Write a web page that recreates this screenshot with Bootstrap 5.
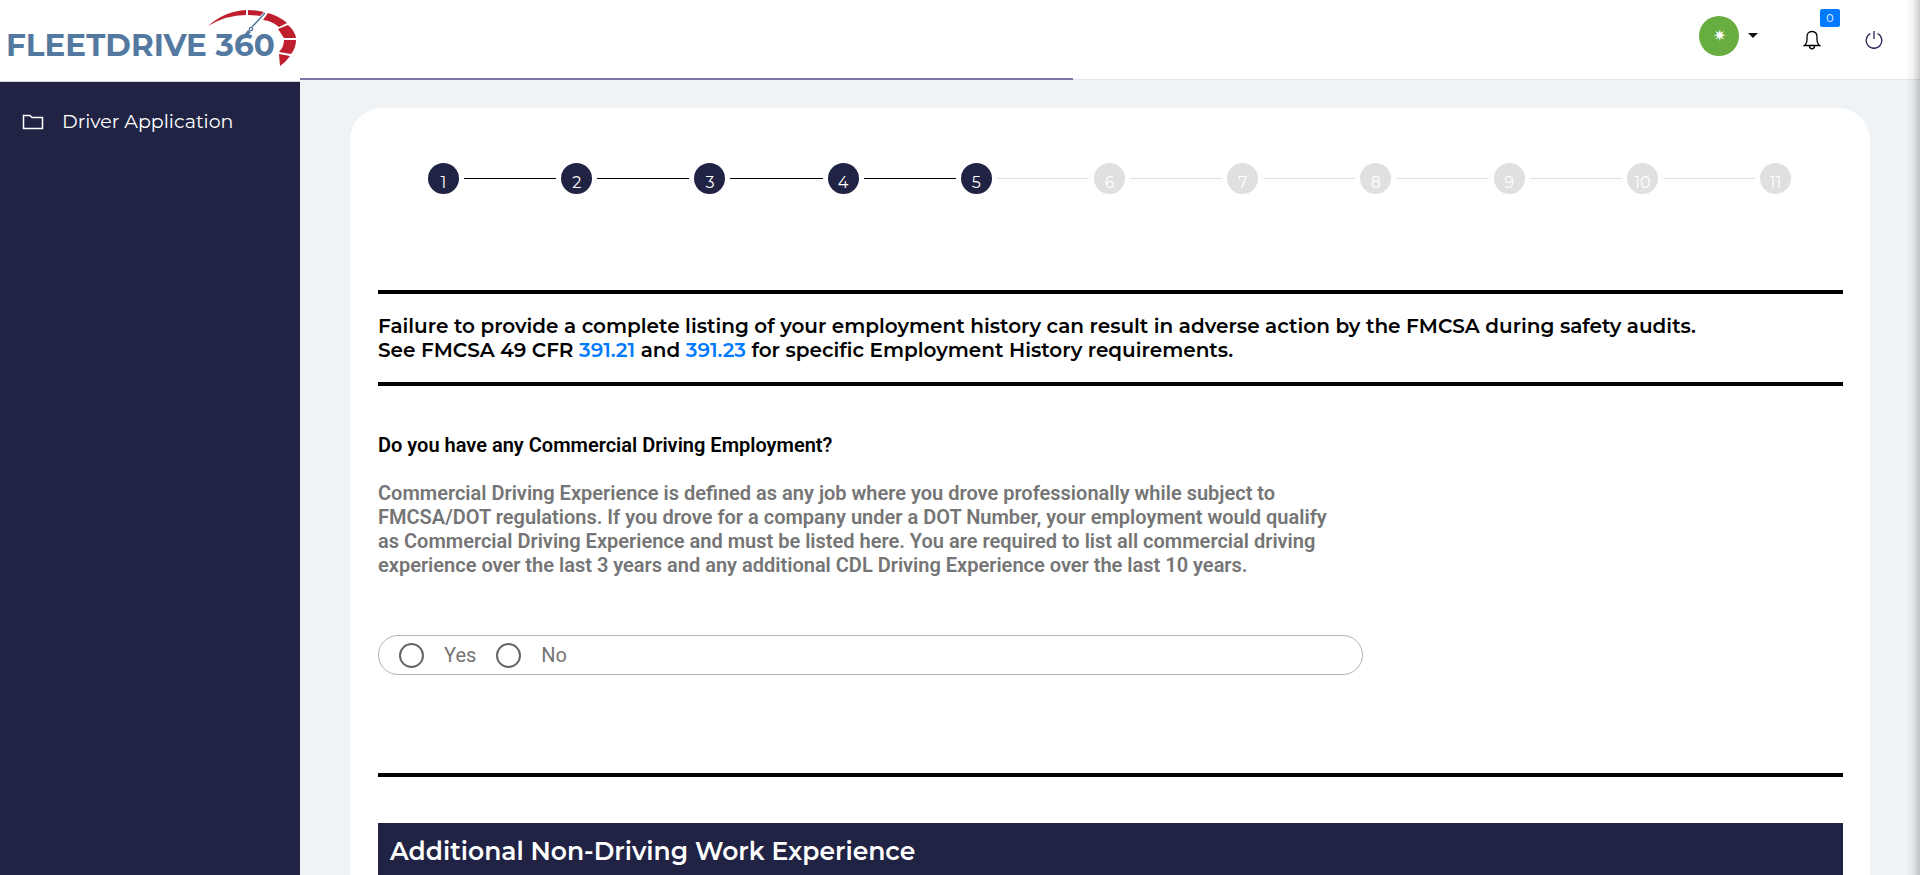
<!DOCTYPE html>
<html lang="en">
<head>
<meta charset="utf-8">
<meta name="viewport" content="width=device-width, initial-scale=1">
<title>FleetDrive 360 - Driver Application</title>
<link href="https://cdn.jsdelivr.net/npm/bootstrap@5.3.0/dist/css/bootstrap.min.css" rel="stylesheet">
<style>
  :root { --navy: #212344; --page: #eff3f6; }
  body { font-family: Montserrat, Inter, sans-serif; background: var(--page); color: #000; overflow-x: hidden; }
  a { text-decoration: none; }
  .side-col { width: 300px; background: var(--navy); }
  .brand-link { height: 82px; background: #fff; border-bottom: 1px solid #d5d5dd; padding: 8px 2px 0 6px; }
  .brand-link svg { width: 100%; }
  .side-link { color: #fff; font-size: 19px; line-height: 24px; gap: 18px; padding: 28px 22px; }
  .main-col { min-width: 0; }
  .top-bar { height: 80px; border-bottom: 1px solid #dde4ea; gap: 44px; padding-right: 37px; }
  .load-bar { left: 0; bottom: -1px; height: 2px; background: #7a78ab; }
  .avatar-btn { gap: 9px; margin: 0 1px 8px 0; }
  .avatar-dot { width: 40px; height: 40px; background: #68ad3f; color: #fff; font-size: 16px; }
  .caret-mark { border: 5px solid transparent; border-top-color: #111; border-bottom: 0; }
  .count-tag { left: 17px; top: -21px; width: 20px; height: 18px; font-size: 11px; line-height: 18px; background: #007bff; color: #fff; border-radius: 2px; }
  .edge-shade { width: 14px; background: linear-gradient(to right, rgba(0,0,0,0), rgba(0,0,0,.05) 50%, rgba(0,0,0,.2)); }
  .form-sheet { margin: 28px 50px 0; padding: 55px 27px 0 28px; border-radius: 32px 32px 0 0; min-height: calc(100vh - 108px); }
  .step-list { margin: 0 52px 96px 50px; gap: 5px; }
  .step-dot { width: 31px; height: 31px; padding-top: 8px; background: #e0e0e0; color: #fff; font-size: 16px; }
  .step-line { height: 1px; background: #e0e0e0; }
  .done .step-dot { background: var(--navy); }
  .step-line.done { background: #000; }
  .notice { border-top: 4px solid #000; border-bottom: 4px solid #000; padding: 20px 0; font-size: 20px; line-height: 24px; font-weight: 600; }
  .notice a { color: #007bff; }
  .question { font-family: Roboto, sans-serif; font-size: 20px; line-height: 24px; max-width: 985px; font-weight: 500; }
  .question h2 { font-size: 20px; line-height: 24px; font-weight: 600; margin: 47px 0 24px; }
  .question p { color: #757575; font-weight: 600; margin: 0; padding: 0 14px 58px 0; }
  .choice-box { border: 1px solid #b5b5b5; border-radius: 20px; height: 40px; padding: 0 20px; gap: 20px; color: #757575; font-weight: 400; }
  .choice-box input { appearance: none; width: 25px; height: 25px; border: 2px solid #666; border-radius: 50%; margin: 0; }
  .choice-box input:checked { box-shadow: inset 0 0 0 5px #fff; background: var(--navy); }
  .rule { height: 4px; background: #000; margin: 98px 0 46px; }
  .band { background: var(--navy); color: #fff; font-size: 25px; line-height: 32px; font-weight: 600; padding: 12px 12px; margin: 0; }
</style>
</head>
<body>
<div class="d-flex min-vh-100">
  <aside class="side-col flex-shrink-0">
    <a class="brand-link d-block" href="#" aria-label="FleetDrive 360">
      <svg viewBox="6 8 292 64" role="img" aria-label="FleetDrive 360">
        <text x="6" y="56" font-family="Montserrat, sans-serif" font-weight="700" font-size="31" fill="#5479a0">FLEETDRIVE 360</text>
        <g fill="#bf1e2e">
          <path d="M208 26Q225 11 246 10V15Q226 15 208 26Z"/>
          <path d="M248 10Q257 10 264 12L260 16Q254 15 248 15Z"/>
          <path d="M268 13Q279 16 287 23L279 27Q272 21 263 20Z"/>
          <path d="M288 25Q295 31 296 38H284L278 29Z"/>
          <path d="M296 40Q296 48 291 54L279 52Q284 47 284 40Z"/>
          <path d="M290 56Q286 62 280 66L279 54Z"/>
        </g>
        <path d="M265 13L252 27" stroke="#5479a0" stroke-width="1.5"/>
        <circle cx="251" cy="29" r="1.700" fill="#fff" stroke="#5479a0" stroke-width="1.300"/>
        <path d="M244 35L248 30L251 32L248 35Z" fill="#5479a0"/>
      </svg>
    </a>
    <nav>
      <a class="side-link d-flex align-items-center" href="#">
        <svg width="22" height="16" viewBox="0 0 22 16" fill="none" stroke="#fff" stroke-width="1.5"><path d="M1.500 14.500V1.500H8L10 3.500H20.500V14.500Z"/></svg>
        Driver Application
      </a>
    </nav>
  </aside>
  <div class="main-col flex-grow-1">
    <header class="top-bar bg-white d-flex align-items-center justify-content-end position-relative">
      <button class="avatar-btn btn border-0 p-0 d-flex align-items-center" type="button" aria-label="Account">
        <span class="avatar-dot rounded-circle d-flex align-items-center justify-content-center">✷</span>
        <span class="caret-mark"></span>
      </button>
      <a class="position-relative d-flex" href="#" aria-label="Notifications">
        <svg width="18" height="20" viewBox="0 0 18 20" fill="none" stroke="#000" stroke-width="1.300"><path d="M1.500 15.500Q4 13.500 4 10V7Q4 1.500 9 1.500T14 7V10Q14 13.500 16.500 15.500ZM6.500 16Q6.500 18.800 9 18.800T11.500 16"/></svg>
        <span class="count-tag position-absolute text-center">0</span>
      </a>
      <a class="d-flex" href="#" aria-label="Sign out">
        <svg width="18" height="18" viewBox="0 0 18 18" fill="none" stroke="#212357" stroke-width="1.300"><path d="M5.500 2.500A7.800 7.800 0 1 0 12.500 2.500M9 0V8"/></svg>
      </a>
      <div class="load-bar position-absolute" style="width:47.7%"></div>
    </header>
    <main class="form-sheet bg-white">
      <div class="step-list d-flex align-items-center" id="steps"></div>
      <div class="notice">Failure to provide a complete listing of your employment history can result in adverse action by the FMCSA during safety audits.<br>See FMCSA 49 CFR <a href="#">391.21</a> and <a href="#">391.23</a> for specific Employment History requirements.</div>
      <section class="question">
        <h2>Do you have any Commercial Driving Employment?</h2>
        <p>Commercial Driving Experience is defined as any job where you drove professionally while subject to FMCSA/DOT regulations. If you drove for a company under a DOT Number, your employment would qualify as Commercial Driving Experience and must be listed here. You are required to list all commercial driving experience over the last 3 years and any additional CDL Driving Experience over the last 10 years.</p>
        <div class="choice-box d-flex align-items-center">
          <input type="radio" name="cde" id="cdeYes"><label for="cdeYes">Yes</label>
          <input type="radio" name="cde" id="cdeNo"><label for="cdeNo">No</label>
        </div>
      </section>
      <div class="rule"></div>
      <h2 class="band">Additional Non-Driving Work Experience</h2>
    </main>
  </div>
</div>
<div class="edge-shade position-fixed top-0 bottom-0 end-0"></div>
<script src="https://cdn.jsdelivr.net/npm/bootstrap@5.3.0/dist/js/bootstrap.bundle.min.js"></script>
<script>
  const current = 5, total = 11;
  let html = '';
  for (let i = 1; i <= total; i++) {
    html += `<div class="${i <= current ? 'done' : ''}"><div class="step-dot rounded-circle d-flex align-items-center justify-content-center">${i}</div></div>`;
    if (i < total) html += `<div class="step-line flex-fill ${i < current ? 'done' : ''}"></div>`;
  }
  document.getElementById('steps').innerHTML = html;
</script>
</body>
</html>
